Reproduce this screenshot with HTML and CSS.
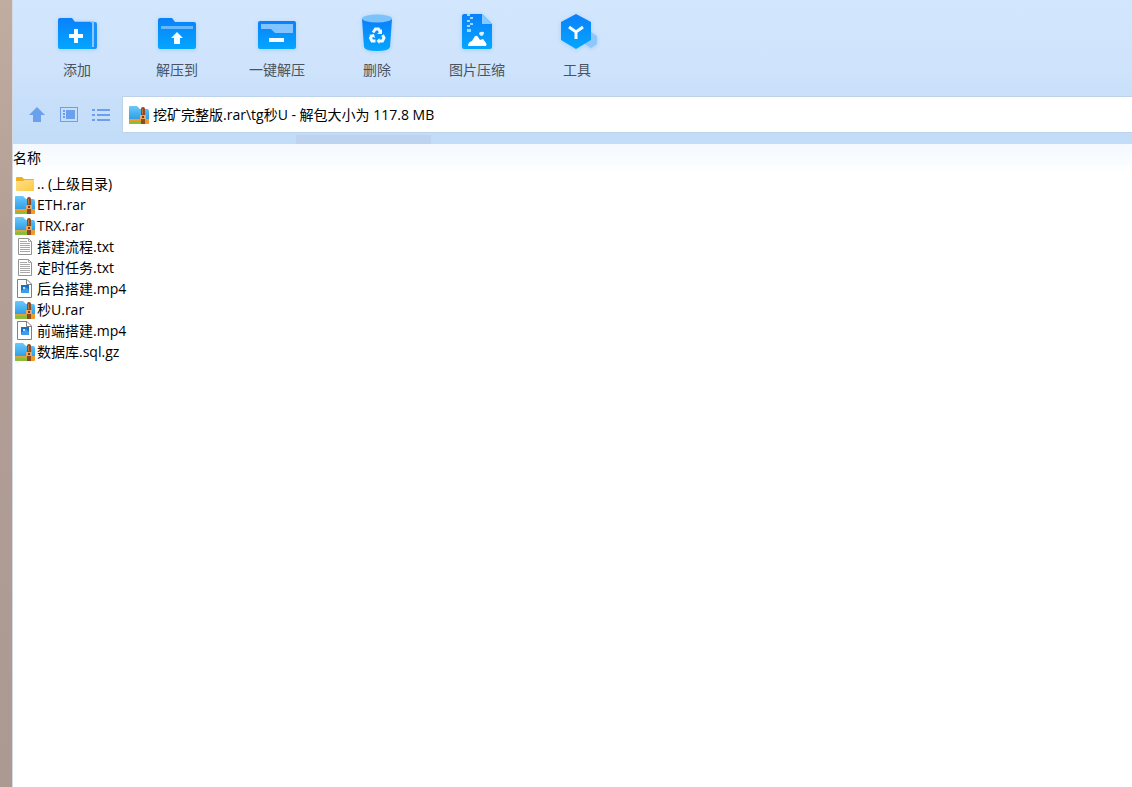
FILE: index.html
```html
<!DOCTYPE html>
<html lang="zh-CN">
<head>
<meta charset="utf-8">
<title>挖矿完整版.rar</title>
<link rel="stylesheet" href="styles.css">
</head>
<body>
<svg class="sprite" aria-hidden="true">
  <defs>
    <linearGradient id="blue" x1="0" y1="0" x2="0" y2="1"><stop offset="0" stop-color="#0a80fa"/><stop offset="1" stop-color="#04a6ff"/></linearGradient>
    <linearGradient id="sky" x1="0" y1="0" x2="0" y2="1"><stop offset="0" stop-color="#6cc8f8"/><stop offset="1" stop-color="#2f9fe8"/></linearGradient>
    <linearGradient id="gold" x1="0" y1="0" x2="1" y2="1"><stop offset="0" stop-color="#ffe08a"/><stop offset="1" stop-color="#fbc943"/></linearGradient>
    <symbol id="rar" viewBox="0 0 20 20">
      <path d="M0 12h20v6q0 1-1 1H1q-1 0-1-1z" fill="#f29a24"/>
      <path d="M0 16h12v3H1q-1 0-1-1z" fill="#8dbb3a"/>
      <path d="M1 1h7l3 3h7q2 0 2 2v8H0V2q0-1 1-1z" fill="url(#sky)"/>
      <path d="M0 14h20v1H0z" fill="#d9a542"/>
      <path d="M12 4q0-2 2-2t2 2v15h-4z" fill="#8f4a22"/>
      <path d="M13 4h1v5h-1z" fill="#b97745"/>
      <path d="M11 10h6v4h-6z" fill="#e8a864"/>
      <path d="M13 11h2v2h-2z" fill="#7d3916"/>
    </symbol>
    <symbol id="folder" viewBox="0 0 20 20">
      <path d="M1 4q0-1 1-1h5l2 2h9q1 0 1 1v4H1z" fill="#eeb01f"/>
      <path d="M1 7h7l2-1h9v10q0 1-1 1H2q-1 0-1-1z" fill="url(#gold)"/>
    </symbol>
    <symbol id="txt" viewBox="0 0 20 20">
      <path d="M3.500 1.500h10l3 3v13h-13z" fill="#fff" stroke="#929292"/>
      <path d="M13.500 1.500v3h3M5 4.500h7M5 6.500h10M5 8.500h10M5 10.500h10M5 12.500h10M5 14.500h10" fill="none" stroke="#a8a8a8"/>
    </symbol>
    <symbol id="mp4" viewBox="0 0 20 20">
      <path d="M2.500.5h9.500l4.500 4.500v13.500h-14z" fill="#fff" stroke="#808080"/>
      <path d="M11.500.5v5h5" fill="none" stroke="#808080"/>
      <path d="M6 6h8v8H6z" fill="#1670c8"/>
      <path d="M6 12l5-4 3 3v3H6z" fill="#3f9ce8"/><path d="M8 8h2v2H8z" fill="#bfe3ff"/>
    </symbol>
  </defs>
</svg>
<div class="desktop">
  <main class="window">
    <header class="head">
      <nav class="toolbar" aria-label="工具栏">
        <button class="tool" type="button">
          <svg class="tool-icon" viewBox="0 0 40 40"><path d="M22 9h16q2 0 2 2v23q0 2-2 2H20z" fill="#1c90f6"/><path d="M16 8h20q1 0 1 2v24h-2V10H16z" fill="#86c9ff"/><path d="M1 7q0-2 2-2h12l3 4h15q2 0 2 2v25H3q-2 0-2-2z" fill="url(#blue)"/><path d="M17 16h4v5h5v4h-5v5h-4v-5h-5v-4h5z" fill="#f4fdff"/></svg>
          <span>添加</span>
        </button>
        <button class="tool" type="button">
          <svg class="tool-icon" viewBox="0 0 40 40"><path d="M1 7q0-2 2-2h12l3 4h19q2 0 2 2v23q0 2-2 2H3q-2 0-2-2z" fill="url(#blue)"/><path d="M4 13h32v3H4z" fill="#66b8fd"/><path d="M20 19l6 6h-3v6h-6v-6h-3z" fill="#f4fdff"/></svg>
          <span>解压到</span>
        </button>
        <button class="tool" type="button">
          <svg class="tool-icon" viewBox="0 0 40 40"><path d="M1 10q0-2 2-2h34q2 0 2 2v24q0 2-2 2H3q-2 0-2-2z" fill="url(#blue)"/><path d="M4 11h32v9H18l-4-4H4z" fill="#82c4ff"/><path d="M12 25h15v4H12z" fill="#f4fdff"/></svg>
          <span>一键解压</span>
        </button>
        <button class="tool" type="button">
          <svg class="tool-icon" viewBox="0 0 40 40"><path d="M5 6h30l-2 28q-1 4-13 4T7 34z" fill="url(#blue)"/><ellipse cx="20" cy="5.500" rx="15" ry="4" fill="#7dc3fb"/><g fill="none" stroke="#eefbff" stroke-width="3"><path d="M16 19.500l2.500-3.500h3l2 3M25.500 22l1.500 3-1.500 3H22M18.500 28H15l-1.500-3 1.500-2.500"/></g><path d="M25 16v5h-5zM22.500 25v6l-3-3zM12 22l5-1 1 4z" fill="#eefbff"/></svg>
          <span>删除</span>
        </button>
        <button class="tool" type="button">
          <svg class="tool-icon" viewBox="0 0 40 40"><path d="M5 3q0-2 2-2h18l10 10v23q0 2-2 2H7q-2 0-2-2z" fill="url(#blue)"/><path d="M25 1l10 10H25z" fill="#8ac9ff"/><path d="M10 1h3v2h-3zM13 4h3v2h-3zM10 7h3v2h-3zM13 10h3v2h-3zM10 12h3v2h-3zM10 16h4v3h-4z" fill="#a5d8ff"/><path d="M11 33q0-4 4-5l3-5q2-1 3 1l2 3 3-1 3 4q1 1 0 3z" fill="#fff"/><path d="M22 20q2-2 5-1 0 4-3 4-2-1-2-3z" fill="#d8efff"/></svg>
          <span>图片压缩</span>
        </button>
        <button class="tool" type="button">
          <svg class="tool-icon" viewBox="0 0 40 40"><path d="M34 19l6 4v8l-6 4-6-4v-8z" fill="#8fc7fb"/><path d="M19 1l15 8v18l-15 9-15-9V9z" fill="url(#blue)"/><path d="M12 14l7 5 7-5M19 19v7" fill="none" stroke="#f4fdff" stroke-width="3"/></svg>
          <span>工具</span>
        </button>
      </nav>
      <div class="nav-row">
        <div class="nav-buttons">
          <button class="nav-button" type="button" aria-label="向上"><svg viewBox="0 0 20 18"><path d="M10 1l8 8h-4v7H6V9H2z"/></svg></button>
          <button class="nav-button" type="button" aria-label="预览"><svg viewBox="0 0 20 18"><path d="M1 1h18v15H1zM2 2v13h16V2z" fill-rule="evenodd"/><path d="M4 4h2v2H4zM4 7h2v2H4zM4 10h2v2H4zM7 4h9v9H7z"/></svg></button>
          <button class="nav-button" type="button" aria-label="列表"><svg viewBox="0 0 20 18"><path d="M1 3h3v2H1zM6 3h13v2H6zM1 8h3v2H1zM6 8h13v2H6zM1 13h3v2H1zM6 13h13v2H6z"/></svg></button>
        </div>
        <label class="address">
          <svg class="file-icon" aria-hidden="true"><use href="#rar"/></svg>
          <input class="address-input" type="text" aria-label="路径" value="挖矿完整版.rar\tg秒U - 解包大小为 117.8 MB">
        </label>
      </div>
    </header>
    <table class="files">
      <thead><tr><th scope="col">名称</th></tr></thead>
      <tbody>
        <tr><td><div class="file"><svg class="file-icon"><use href="#folder"/></svg>.. (上级目录)</div></td></tr>
        <tr><td><div class="file"><svg class="file-icon"><use href="#rar"/></svg>ETH.rar</div></td></tr>
        <tr><td><div class="file"><svg class="file-icon"><use href="#rar"/></svg>TRX.rar</div></td></tr>
        <tr><td><div class="file"><svg class="file-icon"><use href="#txt"/></svg>搭建流程.txt</div></td></tr>
        <tr><td><div class="file"><svg class="file-icon"><use href="#txt"/></svg>定时任务.txt</div></td></tr>
        <tr><td><div class="file"><svg class="file-icon"><use href="#mp4"/></svg>后台搭建.mp4</div></td></tr>
        <tr><td><div class="file"><svg class="file-icon"><use href="#rar"/></svg>秒U.rar</div></td></tr>
        <tr><td><div class="file"><svg class="file-icon"><use href="#mp4"/></svg>前端搭建.mp4</div></td></tr>
        <tr><td><div class="file"><svg class="file-icon"><use href="#rar"/></svg>数据库.sql.gz</div></td></tr>
      </tbody>
    </table>
  </main>
</div>
</body>
</html>
```
FILE: styles.css
```css
* { box-sizing: border-box; }
body {
  margin: 0;
  font: 14px/20px "Open Sans", "Noto Sans CJK SC", sans-serif;
  color: #000;
}
.sprite { position: absolute; width: 0; height: 0; }
.desktop {
  min-height: 100vh;
  display: flex;
  padding-left: 12px;
  background: linear-gradient(#c0aca0, #b49f96 30%, #ab9992);
}
.window {
  flex: 1;
  min-width: 0;
  border-left: 1px solid #d3d9e2;
  background: #fff;
}
.head {
  padding-bottom: 11px;
  background:
    linear-gradient(#bdd3ef, #bdd3ef) 283px 100% / 135px 9px no-repeat,
    linear-gradient(#d2e6fd, #cfe4fc 45%, #c8dffa 70%, #c1dcf8);
}
.toolbar { display: flex; padding: 13px 14px 0; }
.tool {
  width: 100px;
  padding: 0;
  border: 0;
  background: none;
  display: flex;
  flex-direction: column;
  align-items: center;
  gap: 7px;
  font: inherit;
  color: #4a5360;
}
.tool-icon {
  width: 40px;
  height: 40px;
  overflow: visible;
  filter: drop-shadow(0 1px 2px #a5cff8);
}
.nav-row { display: flex; align-items: center; padding-top: 16px; }
.nav-buttons { display: flex; gap: 12px; padding: 0 11px 0 14px; }
.nav-button {
  width: 20px;
  height: 18px;
  padding: 0;
  border: 0;
  background: none;
  fill: #6ba0ed;
}
.nav-button svg { display: block; width: 20px; height: 18px; }
.address {
  flex: 1;
  display: flex;
  align-items: center;
  gap: 4px;
  height: 37px;
  padding-left: 6px;
  border: 1px solid #bed2ea;
  border-right: 0;
  background: #fff;
}
.address-input {
  flex: 1;
  min-width: 0;
  padding: 0;
  border: 0;
  outline: 0;
  background: none;
  font: inherit;
  color: inherit;
}
.file-icon { flex: none; width: 20px; height: 20px; }
.files { width: 100%; border-collapse: collapse; }
.files th {
  height: 29px;
  padding: 0 0 1px;
  text-align: left;
  font-weight: 400;
  background: linear-gradient(#f3f9ff, #fafdff 70%, #fff);
}
.files td { height: 21px; padding: 0; }
.file { display: flex; align-items: center; gap: 2px; padding-left: 2px; }
```
